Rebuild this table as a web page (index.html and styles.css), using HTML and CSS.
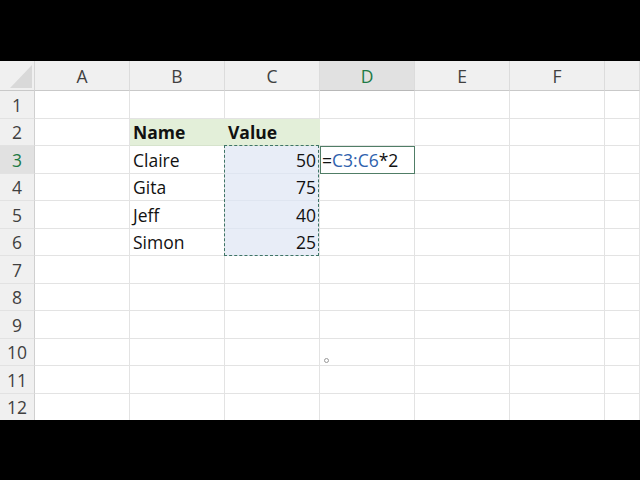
FILE: index.html
```html
<!DOCTYPE html>
<html>
<head>
<meta charset="utf-8">
<link rel="stylesheet" href="styles.css">
</head>
<body>
<div class="screen">
  <div class="bar"></div>
  <div class="sheet">
    <div class="grid">
      <div class="corner"><svg width="35" height="30" viewBox="0 0 35 30"><polygon points="32,4 32,27 10,27" fill="#d9d9d9"/></svg></div>
      <div class="ch">A</div><div class="ch">B</div><div class="ch">C</div><div class="ch active">D</div><div class="ch">E</div><div class="ch">F</div><div class="ch"></div>

      <div class="rh">1</div><div class="c"></div><div class="c"></div><div class="c"></div><div class="c"></div><div class="c"></div><div class="c"></div><div class="c"></div>
      <div class="rh">2</div><div class="c"></div><div class="c hdr">Name</div><div class="c hdr">Value</div><div class="c"></div><div class="c"></div><div class="c"></div><div class="c"></div>
      <div class="rh active">3</div><div class="c"></div><div class="c">Claire</div><div class="c num sel first">50<span class="marquee"></span></div><div class="c formula"><span>=</span><span class="ref">C3:C6</span><span>*2</span></div><div class="c"></div><div class="c"></div><div class="c"></div>
      <div class="rh">4</div><div class="c"></div><div class="c">Gita</div><div class="c num sel">75</div><div class="c"></div><div class="c"></div><div class="c"></div><div class="c"></div>
      <div class="rh">5</div><div class="c"></div><div class="c">Jeff</div><div class="c num sel">40</div><div class="c"></div><div class="c"></div><div class="c"></div><div class="c"></div>
      <div class="rh">6</div><div class="c"></div><div class="c">Simon</div><div class="c num sel">25</div><div class="c"></div><div class="c"></div><div class="c"></div><div class="c"></div>
      <div class="rh">7</div><div class="c"></div><div class="c"></div><div class="c"></div><div class="c"></div><div class="c"></div><div class="c"></div><div class="c"></div>
      <div class="rh">8</div><div class="c"></div><div class="c"></div><div class="c"></div><div class="c"></div><div class="c"></div><div class="c"></div><div class="c"></div>
      <div class="rh">9</div><div class="c"></div><div class="c"></div><div class="c"></div><div class="c"></div><div class="c"></div><div class="c"></div><div class="c"></div>
      <div class="rh">10</div><div class="c"></div><div class="c"></div><div class="c"></div><div class="c"></div><div class="c"></div><div class="c"></div><div class="c"></div>
      <div class="rh">11</div><div class="c"></div><div class="c"></div><div class="c"></div><div class="c"></div><div class="c"></div><div class="c"></div><div class="c"></div>
      <div class="rh">12</div><div class="c"></div><div class="c"></div><div class="c"></div><div class="c"></div><div class="c"></div><div class="c"></div><div class="c"></div>
    </div>
    <div class="cursor"></div>
  </div>
  <div class="bar bottom"></div>
</div>
</body>
</html>
```

FILE: styles.css
```css
html, body {
  margin: 0;
  padding: 0;
  background: #000;
}
.screen {
  width: 640px;
  height: 480px;
  display: flex;
  flex-direction: column;
  overflow: hidden;
}
.bar {
  height: 61px;
  background: #000;
  flex: none;
}
.bar.bottom {
  flex: 1;
  height: auto;
}
.sheet {
  position: relative;
  background: #fff;
  height: 359px;
  overflow: hidden;
  flex: none;
}
.grid {
  display: grid;
  grid-template-columns: 35px 95px 95px 95px 95px 95px 95px 1fr;
  grid-template-rows: 30px 28px 27px 28px 27px 28px 27px 28px 27px 28px 27px 28px 27px;
  font-family: "Open Sans", "Noto Sans", sans-serif;
  font-size: 17.5px;
  color: #111;
}
.corner {
  background: #f0f0f0;
  border-right: 1px solid #d6d6d6;
  border-bottom: 1px solid #c9c9c9;
  box-sizing: border-box;
  overflow: hidden;
}
.corner svg { display: block; }
.ch {
  background: #f0f0f0;
  color: #404040;
  border-right: 1px solid #dcdcdc;
  border-bottom: 1px solid #c9c9c9;
  box-sizing: border-box;
  display: flex;
  align-items: center;
  justify-content: center;
}
.ch.active {
  background: #e1e1e1;
  color: #1d7a45;
  border-bottom-color: #b8b8b8;
}
.rh {
  background: #f0f0f0;
  color: #404040;
  border-right: 1px solid #d0d0d0;
  border-bottom: 1px solid #e2e2e2;
  box-sizing: border-box;
  display: flex;
  align-items: center;
  justify-content: center;
}
.rh.active {
  background: #e1e1e1;
  color: #1d7a45;
}
.c {
  border-right: 1px solid #e3e3e3;
  border-bottom: 1px solid #e3e3e3;
  box-sizing: border-box;
  display: flex;
  align-items: center;
  padding: 0 3px;
  white-space: nowrap;
  min-width: 0;
}
.c.hdr {
  background: #e3efd9;
  font-weight: 700;
  border-right-color: #e3efd9;
  border-bottom-color: #d6e3cc;
}
.c.num {
  justify-content: flex-end;
}
.c.sel {
  background: #e8edf7;
  border-bottom-color: #dfe5f0;
}
.c.first {
  position: relative;
}
.marquee {
  position: absolute;
  z-index: 2;
  top: -1px;
  left: -1px;
  right: 0;
  height: 111px;
  border: 1px dashed #3e7466;
  box-sizing: border-box;
  pointer-events: none;
}
.c.formula {
  padding-left: 2px;
  outline: 1px solid #507d66;
  outline-offset: -1px;
}
.ref {
  color: #2f62ad;
}
.cursor {
  position: absolute;
  left: 324px;
  top: 297px;
  width: 3px;
  height: 3px;
  border: 1px solid #999;
  border-radius: 50%;
  background: #fff;
}
```
